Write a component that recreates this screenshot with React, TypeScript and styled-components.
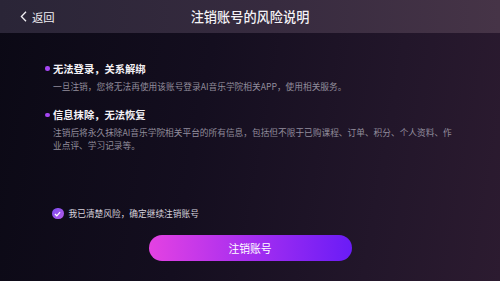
import React, { useState } from 'react';
import styled, { createGlobalStyle } from 'styled-components';

const GlobalStyle = createGlobalStyle`
  html, body {
    margin: 0;
    padding: 0;
    background: #0c0a16;
  }
  * {
    box-sizing: border-box;
  }
`;

const Page = styled.div`
  width: 500px;
  height: 281px;
  display: flex;
  flex-direction: column;
  overflow: hidden;
  font-family: 'Noto Sans CJK SC', 'Noto Sans', sans-serif;
  background: linear-gradient(100deg, #0b0915 0%, #140e1f 40%, #22162a 75%, #2c1b30 100%);
`;

const Header = styled.header`
  height: 33px;
  flex-shrink: 0;
  display: flex;
  align-items: center;
  position: relative;
  background: linear-gradient(90deg, #2a2537 0%, #372b3f 55%, #463447 100%);
`;

const BackButton = styled.button`
  display: flex;
  align-items: center;
  gap: 5px;
  margin-left: 20px;
  padding: 0;
  border: none;
  background: none;
  color: #f2f0f4;
  font-family: inherit;
  font-size: 11.3px;
  cursor: pointer;
  z-index: 1;
`;

const Title = styled.h1`
  position: absolute;
  left: 0;
  right: 0;
  margin: 0;
  text-align: center;
  color: #f4f2f6;
  font-size: 13.2px;
  font-weight: 500;
`;

const Content = styled.main`
  flex: 1;
  display: flex;
  flex-direction: column;
  padding: 28px 40px 0 45px;
`;

const Section = styled.section`
  margin-bottom: 14px;
`;

const SectionTitle = styled.h2`
  display: flex;
  align-items: center;
  gap: 3.5px;
  margin: 0;
  color: #f4f2f6;
  font-size: 10.3px;
  font-weight: 700;
  line-height: 15px;
  &::before {
    content: '';
    width: 4.5px;
    height: 4.5px;
    border-radius: 50%;
    background: #a546f2;
  }
`;

const SectionText = styled.p`
  margin: 5px 0 0 8px;
  color: #928d9c;
  font-size: 8.7px;
  line-height: 12.3px;
`;

const Agree = styled.label`
  display: flex;
  align-items: center;
  gap: 5px;
  margin-top: auto;
  margin-left: 7px;
  color: #d8d4de;
  font-size: 8.7px;
  cursor: pointer;
`;

const Check = styled.span<{ $on: boolean }>`
  width: 11.5px;
  height: 11.5px;
  border-radius: 50%;
  display: flex;
  align-items: center;
  justify-content: center;
  background: ${p => (p.$on ? 'linear-gradient(135deg, #7c4cf0, #b35ae6)' : 'transparent')};
  border: ${p => (p.$on ? 'none' : '1px solid #8d8897')};
`;

const Footer = styled.div`
  display: flex;
  justify-content: center;
  padding: 15px 0 20px 0;
  margin-left: -45px;
  margin-right: -40px;
`;

const Submit = styled.button`
  width: 203px;
  height: 26px;
  border: none;
  border-radius: 13px;
  background: linear-gradient(90deg, #e442e2 0%, #a62ef0 50%, #6a1cf6 100%);
  color: #ffffff;
  font-family: inherit;
  font-size: 10.8px;
  cursor: pointer;
`;

export default function App() {
  const [agreed, setAgreed] = useState(true);
  return (
    <Page>
      <GlobalStyle />
      <Header>
        <BackButton>
          <svg width="7" height="11" viewBox="0 0 7 11">
            <path d="M6 0.8 L1.4 5.5 L6 10.2" fill="none" stroke="#f2f0f4" strokeWidth="1.3" />
          </svg>
          返回
        </BackButton>
        <Title>注销账号的风险说明</Title>
      </Header>
      <Content>
        <Section>
          <SectionTitle>无法登录，关系解绑</SectionTitle>
          <SectionText>一旦注销，您将无法再使用该账号登录AI音乐学院相关APP，使用相关服务。</SectionText>
        </Section>
        <Section>
          <SectionTitle>信息抹除，无法恢复</SectionTitle>
          <SectionText>
            注销后将永久抹除AI音乐学院相关平台的所有信息，包括但不限于已购课程、订单、积分、个人资料、作业点评、学习记录等。
          </SectionText>
        </Section>
        <Agree onClick={() => setAgreed(!agreed)}>
          <Check $on={agreed}>
            {agreed && (
              <svg width="7" height="6" viewBox="0 0 7 6">
                <path d="M0.9 3 L2.8 4.8 L6.1 1.1" fill="none" stroke="#ffffff" strokeWidth="1.2" />
              </svg>
            )}
          </Check>
          我已清楚风险，确定继续注销账号
        </Agree>
        <Footer>
          <Submit>注销账号</Submit>
        </Footer>
      </Content>
    </Page>
  );
}
